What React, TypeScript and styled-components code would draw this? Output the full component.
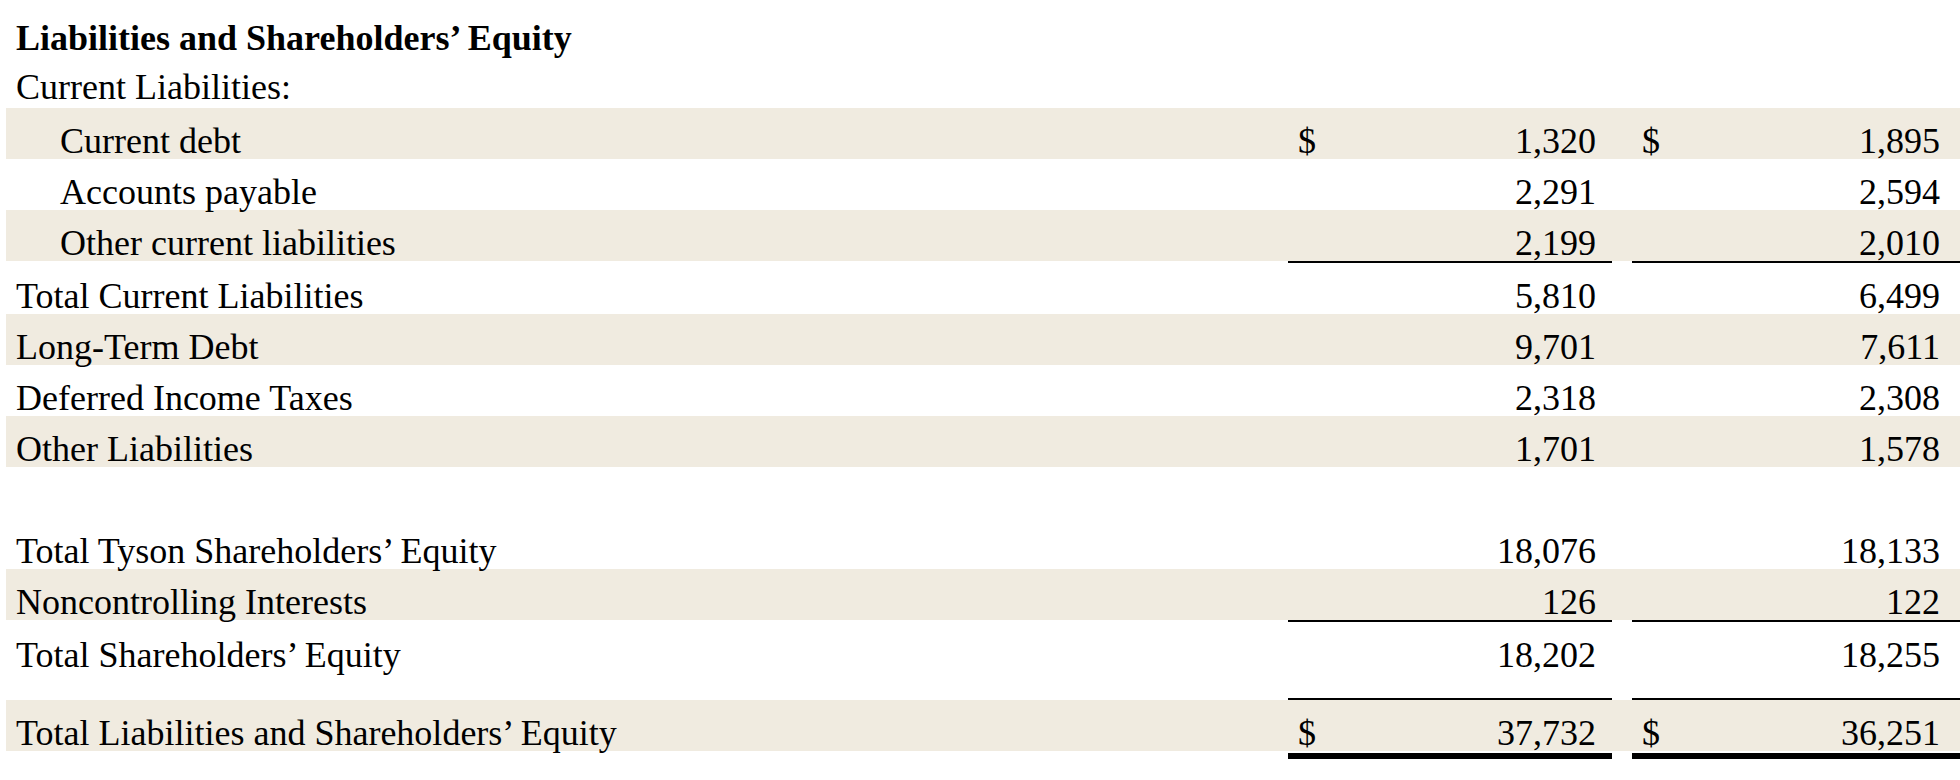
import React from 'react';
import styled, { createGlobalStyle } from 'styled-components';

const GlobalStyle = createGlobalStyle`
  html, body {
    margin: 0;
    padding: 0;
    background: #ffffff;
  }
`;

const COLUMNS = '1fr 324px 328px';

const Sheet = styled.div`
  width: 1960px;
  box-sizing: border-box;
  padding: 20px 0 0 6px;
  font-family: 'Liberation Serif', 'Times New Roman', serif;
  font-size: 36px;
  color: #000;
  white-space: nowrap;
`;

const Title = styled.div`
  padding-left: 10px;
  font-weight: 700;
  line-height: 36px;
`;

const SubTitle = styled.div`
  padding-left: 10px;
  line-height: 36px;
  margin: 13px 0 3px;
`;

const Row = styled.div<{ $shaded?: boolean }>`
  display: grid;
  grid-template-columns: ${COLUMNS};
  column-gap: 20px;
  height: 51px;
  box-sizing: border-box;
  padding-top: 15px;
  line-height: 36px;
  background-color: ${props => (props.$shaded ? '#f0ebe0' : 'transparent')};
`;

const Spacer = styled.div<{ $height: number }>`
  height: ${props => props.$height}px;
`;

const Label = styled.div<{ $indent?: boolean }>`
  padding-left: ${props => (props.$indent ? 54 : 10)}px;
`;

const Amount = styled.div<{ $last?: boolean }>`
  display: flex;
  justify-content: space-between;
  padding: 0 ${props => (props.$last ? 20 : 16)}px 0 10px;
`;

// 금액 열 아래의 밑줄 (합계 구분선)
const Rule = styled.div<{ $weight: number; $gap?: number }>`
  display: grid;
  grid-template-columns: ${COLUMNS};
  column-gap: 20px;
  height: ${props => props.$weight}px;
  margin-top: ${props => props.$gap ?? 0}px;
`;

const RuleLine = styled.span`
  background-color: #000;
`;

type Line = {
  label: string;
  a: string;
  b: string;
  indent?: boolean;
  dollar?: boolean;
};

const AmountRow: React.FC<{ line: Line; shaded?: boolean }> = ({ line, shaded }) => (
  <Row $shaded={shaded}>
    <Label $indent={line.indent}>{line.label}</Label>
    <Amount>
      <span>{line.dollar ? '$' : ''}</span>
      <span>{line.a}</span>
    </Amount>
    <Amount $last>
      <span>{line.dollar ? '$' : ''}</span>
      <span>{line.b}</span>
    </Amount>
  </Row>
);

const UnderRule: React.FC<{ weight?: number; gap?: number }> = ({ weight = 2, gap }) => (
  <Rule $weight={weight} $gap={gap}>
    <span />
    <RuleLine />
    <RuleLine />
  </Rule>
);

const App: React.FC = () => {
  return (
    <>
      <GlobalStyle />
      <Sheet>
        <Title>Liabilities and Shareholders’ Equity</Title>
        <SubTitle>Current Liabilities:</SubTitle>

        <AmountRow shaded line={{ label: 'Current debt', a: '1,320', b: '1,895', indent: true, dollar: true }} />
        <AmountRow line={{ label: 'Accounts payable', a: '2,291', b: '2,594', indent: true }} />
        <AmountRow shaded line={{ label: 'Other current liabilities', a: '2,199', b: '2,010', indent: true }} />
        <UnderRule />
        <AmountRow line={{ label: 'Total Current Liabilities', a: '5,810', b: '6,499' }} />
        <AmountRow shaded line={{ label: 'Long-Term Debt', a: '9,701', b: '7,611' }} />
        <AmountRow line={{ label: 'Deferred Income Taxes', a: '2,318', b: '2,308' }} />
        <AmountRow shaded line={{ label: 'Other Liabilities', a: '1,701', b: '1,578' }} />

        <Spacer $height={51} />

        <AmountRow line={{ label: 'Total Tyson Shareholders’ Equity', a: '18,076', b: '18,133' }} />
        <AmountRow shaded line={{ label: 'Noncontrolling Interests', a: '126', b: '122' }} />
        <UnderRule />
        <AmountRow line={{ label: 'Total Shareholders’ Equity', a: '18,202', b: '18,255' }} />

        <Spacer $height={25} />
        <UnderRule />
        <AmountRow
          shaded
          line={{ label: 'Total Liabilities and Shareholders’ Equity', a: '37,732', b: '36,251', dollar: true }}
        />
        <UnderRule weight={6} gap={2} />
      </Sheet>
    </>
  );
};

export default App;
